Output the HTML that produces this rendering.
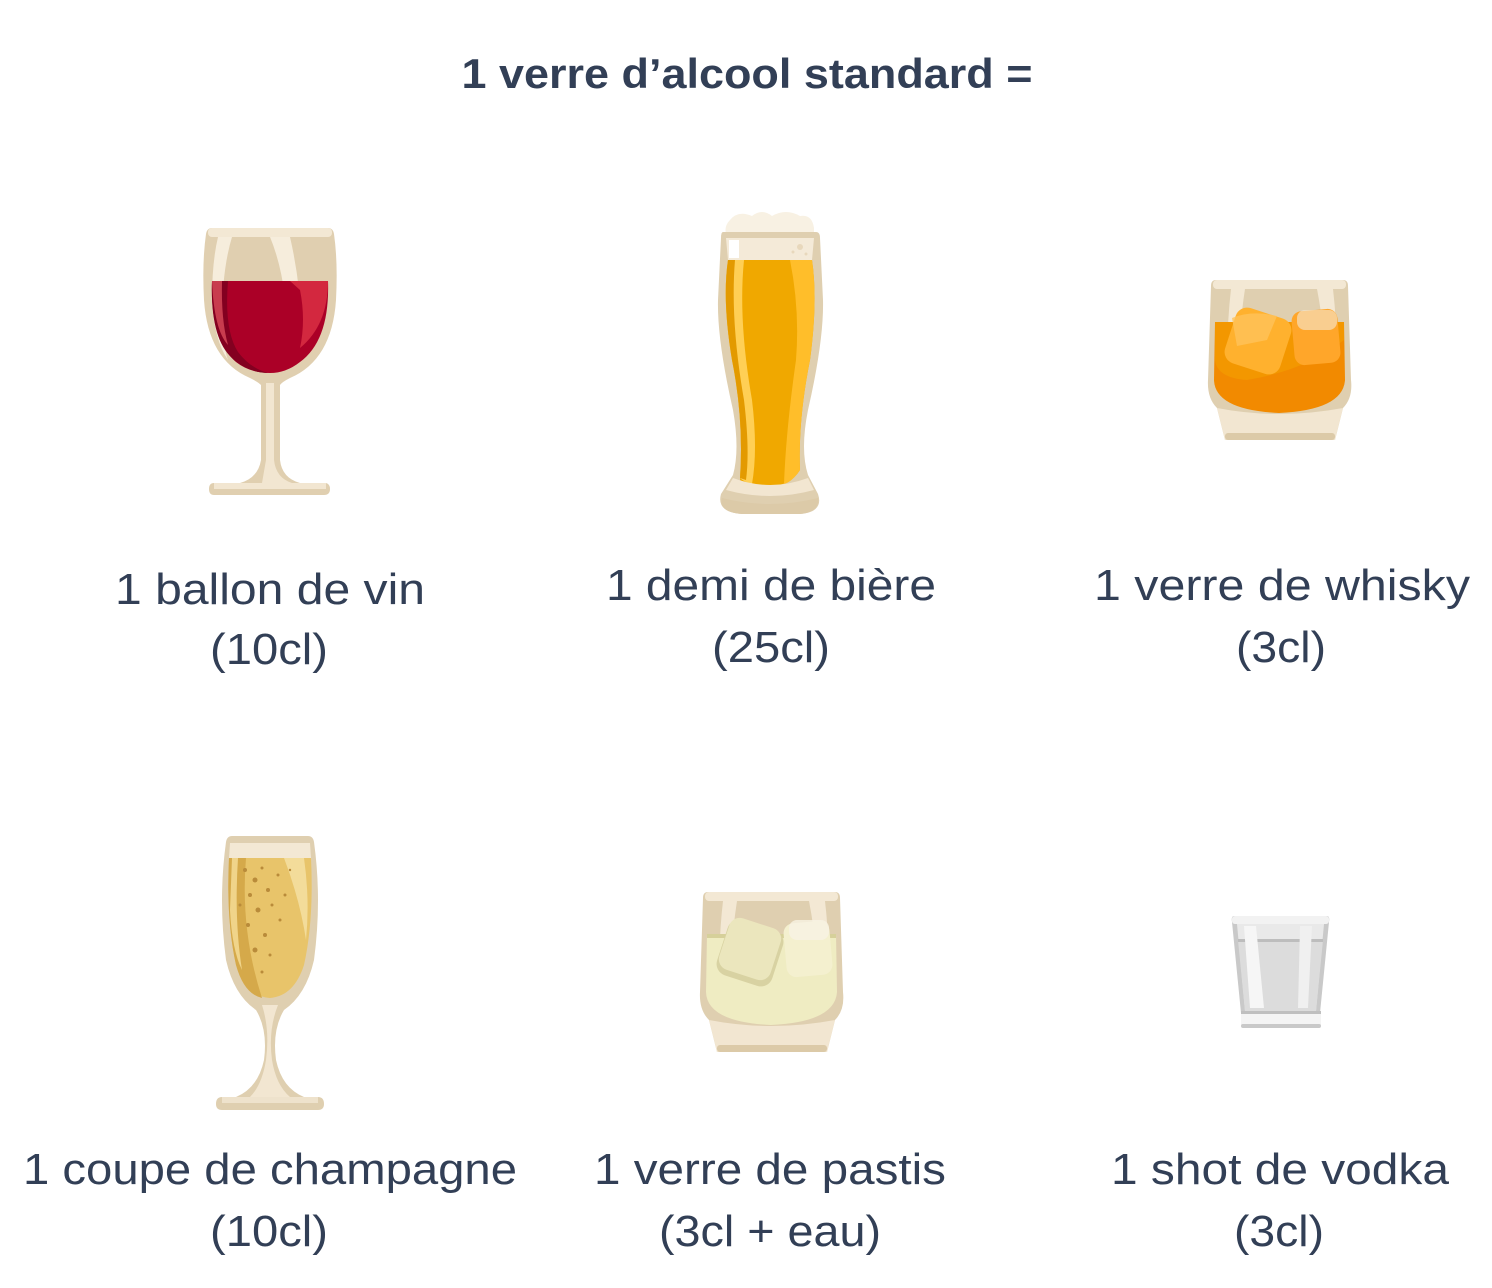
<!DOCTYPE html>
<html><head><meta charset="utf-8"><style>
html,body{margin:0;padding:0;background:#fff}
svg{display:block}
text{font-family:"Liberation Sans",sans-serif;fill:#323f56}
</style></head><body>
<svg width="1492" height="1288" viewBox="0 0 1492 1288">
<text x="747" y="88" font-size="42" font-weight="bold" text-anchor="middle" textLength="571" lengthAdjust="spacingAndGlyphs">1 verre d’alcool standard =</text>

<!-- labels -->
<g font-size="44" text-anchor="middle">
<text x="270" y="604" textLength="310" lengthAdjust="spacingAndGlyphs">1 ballon de vin</text>
<text x="269" y="664" textLength="118" lengthAdjust="spacingAndGlyphs">(10cl)</text>
<text x="771" y="600" textLength="330" lengthAdjust="spacingAndGlyphs">1 demi de bière</text>
<text x="771" y="662" textLength="118" lengthAdjust="spacingAndGlyphs">(25cl)</text>
<text x="1282" y="600" textLength="376" lengthAdjust="spacingAndGlyphs">1 verre de whisky</text>
<text x="1281" y="662" textLength="90" lengthAdjust="spacingAndGlyphs">(3cl)</text>
<text x="270" y="1184" textLength="494" lengthAdjust="spacingAndGlyphs">1 coupe de champagne</text>
<text x="269" y="1246" textLength="118" lengthAdjust="spacingAndGlyphs">(10cl)</text>
<text x="770" y="1184" textLength="352" lengthAdjust="spacingAndGlyphs">1 verre de pastis</text>
<text x="770" y="1246" textLength="222" lengthAdjust="spacingAndGlyphs">(3cl + eau)</text>
<text x="1280" y="1184" textLength="338" lengthAdjust="spacingAndGlyphs">1 shot de vodka</text>
<text x="1279" y="1246" textLength="90" lengthAdjust="spacingAndGlyphs">(3cl)</text>
</g>

<!-- wine glass -->
<g>
<path d="M212,228 H328 Q333,228 334,234 Q338,262 336,300 Q332,360 290,378 Q282,382 280,385 L280,460 Q282,478 300,483 H326 Q330,484 330,489 Q330,495 324,495 H214 Q209,495 209,489 Q209,483 214,483 H240 Q258,478 261,460 L261,385 Q258,382 250,378 Q208,360 204,300 Q202,262 206,234 Q207,228 212,228 Z" fill="#e0cfb0"/>
<path d="M266,383 H274 L274,460 Q276,478 292,483 H262 L266,460 Z" fill="#f2e6d1"/>
<path d="M214,483 H326 V489 H214 Z" fill="#f2e6d1"/>
<rect x="208" y="228" width="124" height="9" rx="4" fill="#f3e8d4"/>
<path d="M218,237 H232 Q222,270 222,320 Q224,350 228,360 Q214,340 212,300 Q212,262 218,237 Z" fill="#f6eddc"/>
<path d="M270,237 H290 Q300,280 302,330 Q300,355 297,362 L288,350 Q288,280 270,237 Z" fill="#f6eddc"/>
<path d="M212,281 H328 Q330,340 300,362 Q286,373 270,373 Q250,373 236,362 Q210,340 212,281 Z" fill="#ab0027"/>
<path d="M212,281 H228 Q224,330 238,352 Q250,368 268,373 Q246,372 232,358 Q210,338 212,281 Z" fill="#830020"/>
<path d="M212,281 H222 Q221,320 228,345 Q214,330 212,281 Z" fill="#c83c4e"/>
<path d="M290,281 H328 Q328,325 300,348 Q306,320 300,290 Z" fill="#d3283f"/>
</g>

<!-- beer -->
<g>
<path d="M730,220 Q738,210 752,216 Q762,208 772,216 Q786,208 800,216 Q812,214 814,228 L814,234 H726 Q724,226 730,220 Z" fill="#f8f1e3"/>
<path d="M723,232 H816 Q820,232 820,238 L823,300 Q824,340 808,410 Q800,450 808,475 L818,494 Q824,512 800,514 H742 Q716,512 721,494 L733,475 Q740,450 733,410 Q717,340 718,300 L721,238 Q721,232 723,232 Z" fill="#dfcfb0"/>
<path d="M726,238 H814 L812,260 H728 Z" fill="#f4ead8"/>
<rect x="729" y="240" width="10" height="18" fill="#fff"/>
<circle cx="800" cy="247" r="3" fill="#e8d8bc"/><circle cx="793" cy="252" r="1.5" fill="#e8d8bc"/><circle cx="806" cy="254" r="1.5" fill="#e8d8bc"/>
<path d="M728,260 H812 Q818,300 810,360 Q798,420 800,470 Q790,486 770,486 Q750,486 740,480 Q744,420 732,360 Q722,300 728,260 Z" fill="#f0a800"/>
<path d="M728,260 H744 Q738,320 752,400 Q758,450 752,484 Q744,482 740,478 Q744,420 732,360 Q722,300 728,260 Z" fill="#ffcf55"/>
<path d="M728,260 H735 Q730,320 744,400 Q750,450 746,480 L740,478 Q744,420 732,360 Q722,300 728,260 Z" fill="#e39a00"/>
<path d="M790,260 H812 Q818,300 810,360 Q798,420 800,470 Q792,482 784,484 Q786,430 796,360 Q800,310 790,260 Z" fill="#ffbe2a"/>
<path d="M733,478 Q770,492 808,478 L814,490 Q770,502 726,490 Z" fill="#f2e6d1"/>
<path d="M722,498 Q770,510 818,498 Q820,512 800,514 H742 Q718,512 722,498 Z" fill="#dccaa8"/>
</g>

<!-- tumbler: whisky -->
<g transform="translate(1207,280)">
<path d="M9,0 H136 Q141,0 141,6 L144,100 Q146,118 136,128 L128,160 H18 L10,128 Q0,118 1,100 L4,6 Q4,0 9,0 Z" fill="#dfcfb0"/>
<rect x="6" y="0" width="133" height="9" rx="4" fill="#f3e8d4"/>
<path d="M24,9 H38 Q30,60 32,120 L22,118 Q18,60 24,9 Z" fill="#f3e8d4"/>
<path d="M110,9 H126 Q132,60 128,118 L118,120 Q120,60 110,9 Z" fill="#f3e8d4"/>
<path d="M8,42 H137 L138,100 Q136,130 72,133 Q8,130 7,100 Z" fill="#f28a00"/>
<path d="M8,42 H137 L137,60 Q100,90 40,100 Q10,98 8,80 Z" fill="#f39a00" opacity=".8"/>
<rect x="86" y="30" width="46" height="54" rx="10" transform="rotate(-5 109 57)" fill="#ffa62a"/>
<rect x="90" y="30" width="40" height="20" rx="8" fill="#f5e9d6" opacity=".6"/>
<rect x="22" y="32" width="58" height="58" rx="12" transform="rotate(18 51 61)" fill="#ffb12e"/>
<path d="M25,38 Q45,30 70,36 L60,60 L30,66 Z" fill="#ffc35a" opacity=".8"/>
<path d="M10,128 Q72,140 136,128 L128,160 H18 Z" fill="#f2e6d1"/>
<rect x="18" y="153" width="110" height="7" rx="3" fill="#dccaa8"/>
</g>

<!-- tumbler: pastis -->
<g transform="translate(699,892)">
<path d="M9,0 H136 Q141,0 141,6 L144,100 Q146,118 136,128 L128,160 H18 L10,128 Q0,118 1,100 L4,6 Q4,0 9,0 Z" fill="#dfcfb0"/>
<rect x="6" y="0" width="133" height="9" rx="4" fill="#f3e8d4"/>
<path d="M24,9 H38 Q30,60 32,120 L22,118 Q18,60 24,9 Z" fill="#f3e8d4"/>
<path d="M110,9 H126 Q132,60 128,118 L118,120 Q120,60 110,9 Z" fill="#f3e8d4"/>
<path d="M8,42 H137 L138,100 Q136,130 72,133 Q8,130 7,100 Z" fill="#efecc2"/>
<rect x="8" y="42" width="129" height="4" fill="#d6d09a"/>
<rect x="86" y="30" width="46" height="54" rx="10" transform="rotate(-5 109 57)" fill="#f4f0cf"/>
<rect x="90" y="28" width="40" height="20" rx="8" fill="#f8f2e4" opacity=".8"/>
<rect x="22" y="32" width="58" height="58" rx="12" transform="rotate(18 51 61)" fill="#d8d2a2"/>
<rect x="24" y="30" width="54" height="54" rx="11" transform="rotate(18 51 57)" fill="#ebe6bd"/>
<path d="M10,128 Q72,140 136,128 L128,160 H18 Z" fill="#f2e6d1"/>
<rect x="18" y="153" width="110" height="7" rx="3" fill="#dccaa8"/>
</g>

<!-- champagne -->
<g>
<path d="M232,836 H308 Q313,836 314,842 Q322,900 314,960 Q306,995 284,1010 Q272,1030 276,1060 Q282,1088 304,1097 H318 Q324,1097 324,1104 Q324,1110 318,1110 H222 Q216,1110 216,1104 Q216,1097 222,1097 H236 Q258,1088 264,1060 Q268,1030 256,1010 Q234,995 226,960 Q218,900 226,842 Q227,836 232,836 Z" fill="#dfcfb0"/>
<path d="M262,1005 H278 Q268,1030 272,1060 Q276,1085 290,1097 H250 Q262,1085 266,1060 Q270,1030 262,1005 Z" fill="#f2e6d1"/>
<path d="M222,1097 H318 V1103 H222 Z" fill="#eee2cc"/>
<path d="M230,843 H310 L311,858 H229 Z" fill="#f3e8d4"/>
<path d="M229,858 H311 Q314,920 304,965 Q294,996 270,998 Q246,996 236,965 Q226,920 229,858 Z" fill="#e8c46a"/>
<path d="M229,858 H246 Q240,930 262,998 Q244,994 236,965 Q226,920 229,858 Z" fill="#d5a94a"/>
<path d="M232,858 H238 Q234,920 242,970 Q232,950 230,910 Z" fill="#f0d48a"/>
<path d="M284,858 H304 Q310,900 306,940 Q300,900 284,858 Z" fill="#f3dc9a"/>
<g fill="#b98b3a">
<circle cx="245" cy="870" r="2"/><circle cx="255" cy="880" r="2.5"/><circle cx="262" cy="868" r="1.5"/><circle cx="250" cy="895" r="2"/><circle cx="268" cy="890" r="2"/><circle cx="258" cy="910" r="2.5"/><circle cx="272" cy="905" r="1.5"/><circle cx="248" cy="925" r="2"/><circle cx="265" cy="935" r="2"/><circle cx="255" cy="950" r="2.5"/><circle cx="278" cy="875" r="1.5"/><circle cx="285" cy="895" r="1.5"/><circle cx="240" cy="905" r="1.5"/><circle cx="270" cy="955" r="1.5"/><circle cx="262" cy="972" r="1.5"/><circle cx="290" cy="870" r="1.2"/><circle cx="280" cy="920" r="1.5"/>
</g>
</g>

<!-- vodka shot -->
<g>
<path d="M1234,916 H1327 Q1330,916 1329,922 L1320,1013 H1241 L1232,922 Q1231,916 1234,916 Z" fill="#c9c9c9"/>
<rect x="1232" y="916" width="97" height="8" rx="3" fill="#f2f2f2"/>
<path d="M1237,924 H1324 L1316,1011 H1245 Z" fill="#e9e9e9"/>
<path d="M1238,940 H1323 L1316,1011 H1245 Z" fill="#dcdcdc"/>
<rect x="1238" y="939" width="85" height="3" fill="#bdbdbd"/>
<path d="M1244,926 H1256 L1264,1008 H1250 Z" fill="#f6f6f6"/>
<path d="M1300,926 H1312 L1308,1008 H1298 Z" fill="#f0f0f0"/>
<rect x="1241" y="1011" width="80" height="17" rx="3" fill="#f4f4f4"/>
<rect x="1241" y="1011" width="80" height="3" fill="#bfbfbf"/>
<rect x="1241" y="1024" width="80" height="4" rx="2" fill="#c9c9c9"/>
</g>
</svg>
</body></html>
